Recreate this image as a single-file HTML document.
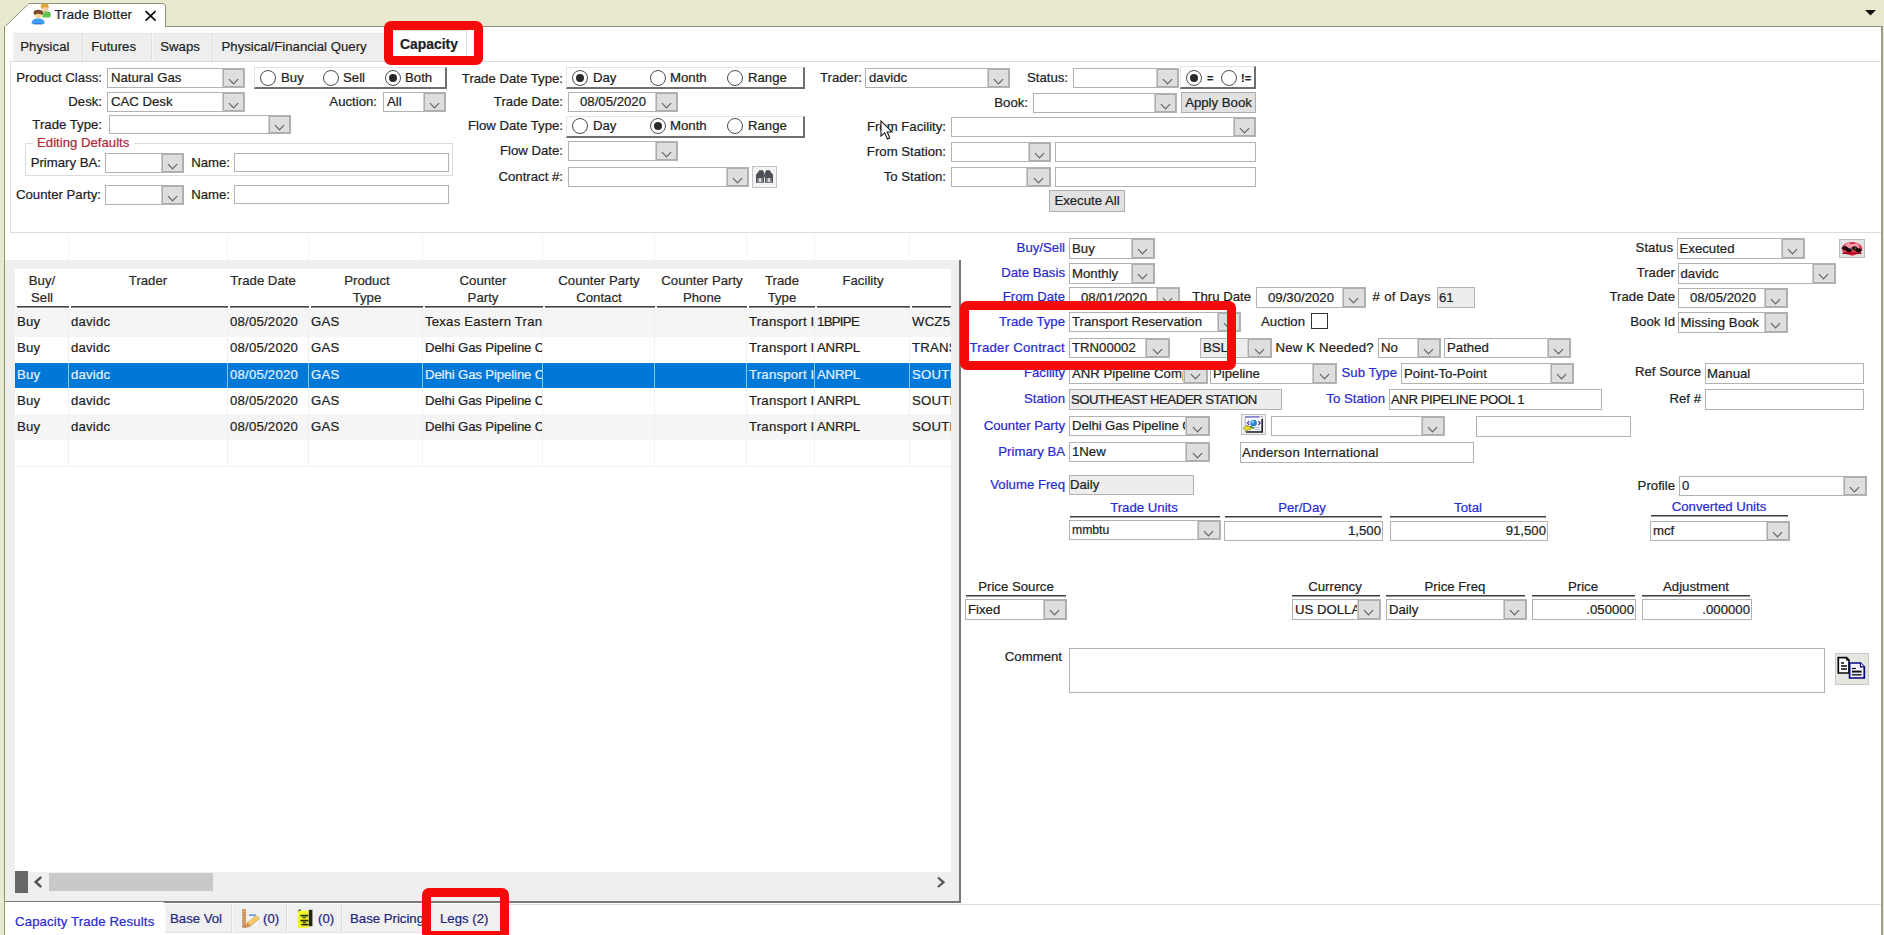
<!DOCTYPE html>
<html lang="en"><head><meta charset="utf-8"><title>Trade Blotter</title>
<style>
html,body{margin:0;padding:0}
body{width:1884px;height:935px;position:relative;overflow:hidden;background:#e9e9d0;font:13.2px "Liberation Sans",sans-serif;color:#1e1e1e;-webkit-text-stroke:.22px}
div,b,i,span{box-sizing:border-box}
.t{position:absolute;white-space:nowrap;line-height:16px;height:16px}
.bl{color:#2a2ad2}
.c{position:absolute;background:#fff;border:1px solid #b2b2b2;overflow:hidden;white-space:nowrap}
.c span{position:absolute;left:3px;top:0}
.c i{position:absolute;right:0;top:0;bottom:0;background:#dedede;border:1px solid #adadad;box-shadow:-1px 0 0 #cfcfcf}
.c i::after{content:"";position:absolute;left:50%;top:50%;width:6px;height:6px;margin:-2.5px 0 0 -4px;border-right:1.3px solid #585858;border-bottom:1.3px solid #585858;transform:rotate(45deg)}
.f{position:absolute;background:#fff;border:1px solid #b2b2b2;overflow:hidden;white-space:nowrap;padding:0 1px}
.g{background:#ededed}
.c.g span{color:#1e1e1e}
.ra{text-align:right}
.r{position:absolute;width:16px;height:16px;border:1.4px solid #4a4a4a;border-radius:50%;background:#fff}
.r.s::after{content:"";position:absolute;left:2.6px;top:2.6px;width:8px;height:8px;border-radius:50%;background:#2a2a2a}
.btn{position:absolute;background:#e1e1e1;border:1px solid #adadad;text-align:center;white-space:nowrap}
.rg{position:absolute;background:#fff;border-top:1px solid #e3e3e3;border-left:1px solid #e3e3e3;border-right:2px solid #6f6f6f;border-bottom:2px solid #6f6f6f}
.th{text-align:center;line-height:17px;height:auto;color:#2a2a2a}
.tr{overflow:hidden}
.td{position:absolute;top:0;height:25px;line-height:22px;padding-left:2px;overflow:hidden;white-space:nowrap;letter-spacing:.2px}
.sel{color:#e4f1ff}

</style></head>
<body>
<div class="" style="position:absolute;left:4px;top:26px;width:1879px;height:914px;background:#fff;border:1px solid #8e9277;border-right:2px solid #9da184"></div>
<svg style="position:absolute;left:0;top:0" width="200" height="30"><path d="M4.5 28 V27 L29 3.5 H162.5 Q165.5 3.5 165.5 6.5 V26.5" fill="#fff" stroke="#8e9277" stroke-width="1"/><rect x="5" y="26" width="160" height="3" fill="#fff"/></svg>
<div class="t " style="left:54.6px;top:7px;letter-spacing:.14px">Trade Blotter</div>
<svg style="position:absolute;left:143px;top:9px" width="14" height="14"><path d="M2.6 2.2 L12.6 11.6 M12.6 2.2 L2.6 11.600" stroke="#111" stroke-width="1.8" fill="none"/></svg>
<svg style="position:absolute;left:30px;top:2px" width="22" height="24" viewBox="0 0 22 24"><ellipse cx="14.7" cy="4.6" rx="4" ry="3" fill="#e2a437"/><ellipse cx="14.9" cy="7.6" rx="3.1" ry="2.3" fill="#f7cfa4"/><path d="M12.4 15.6 V12 Q12.4 9.3 16.6 9.3 T20.8 12.4 V14 Q20.8 15.6 18 15.6Z" fill="#5fc14e"/><path d="M13 15.6 V12.5 Q14 10 16.6 10" fill="none" stroke="#8fe07a" stroke-width="1"/><ellipse cx="8.3" cy="10.6" rx="4.8" ry="2.9" fill="#7b4b2c"/><ellipse cx="8.3" cy="13.6" rx="3.2" ry="2.6" fill="#f9d490"/><path d="M4 11.6 Q8 9.6 12.6 11.8 L12.6 12.6 Q8 10.8 4 12.6Z" fill="#7b4b2c"/><path d="M1.6 21.2 Q1.6 16.4 8.1 16.4 T14.6 21.2 V21.8 H1.6Z" fill="#3d9cf1"/><path d="M3.4 21.8 H12.6" stroke="#1f6fd0" stroke-width="1.2"/></svg>
<svg style="position:absolute;left:1864px;top:9px" width="14" height="8"><path d="M1 1 H12 L6.5 6.5z" fill="#111"/></svg>
<div class="" style="position:absolute;left:13px;top:33px;width:70px;height:29px;background:#eeeeee;border-top:1px solid #e6e6e6;border-left:1px solid #f7f7f7;border-right:1px solid #dfdfdf"></div>
<div class="t " style="left:20.3px;top:39px;">Physical</div>
<div class="" style="position:absolute;left:83px;top:33px;width:69px;height:29px;background:#eeeeee;border-top:1px solid #e6e6e6;border-left:1px solid #f7f7f7;border-right:1px solid #dfdfdf"></div>
<div class="t " style="left:91.3px;top:39px;">Futures</div>
<div class="" style="position:absolute;left:152px;top:33px;width:61px;height:29px;background:#eeeeee;border-top:1px solid #e6e6e6;border-left:1px solid #f7f7f7;border-right:1px solid #dfdfdf"></div>
<div class="t " style="left:160.3px;top:39px;">Swaps</div>
<div class="" style="position:absolute;left:213px;top:33px;width:173px;height:29px;background:#eeeeee;border-top:1px solid #e6e6e6;border-left:1px solid #f7f7f7;border-right:1px solid #dfdfdf"></div>
<div class="t " style="left:221.5px;top:39px;">Physical/Financial Query</div>
<div class="" style="position:absolute;left:386px;top:30px;width:81px;height:33px;background:#fff;border:1px solid #dcdcdc;border-bottom:none"></div>
<div class="t " style="left:400px;top:36px;font-weight:bold;font-size:13.9px">Capacity</div>
<div class="" style="position:absolute;left:10px;top:61px;width:1871px;height:172px;background:#fff;border:1px solid #dcdcdc;border-right:none"></div>
<div class="" style="position:absolute;left:387px;top:61px;width:79px;height:2px;background:#fff"></div>
<div class="t " style="right:1782px;top:70px;">Product Class:</div>
<div class="c " style="left:107px;top:68px;width:138px;height:20px"><span style="line-height:18px;">Natural Gas</span><i style="width:21px"></i></div>
<div class="rg" style="position:absolute;left:254px;top:67px;width:193px;height:22px;"></div>
<b class="r" style="left:260px;top:70px"></b>
<div class="t " style="left:281px;top:70px;">Buy</div>
<b class="r" style="left:323px;top:70px"></b>
<div class="t " style="left:343px;top:70px;">Sell</div>
<b class="r s" style="left:385px;top:70px"></b>
<div class="t " style="left:405px;top:70px;">Both</div>
<div class="t " style="right:1321px;top:71px;">Trade Date Type:</div>
<div class="rg" style="position:absolute;left:566px;top:67px;width:239px;height:22px;"></div>
<b class="r s" style="left:572px;top:70px"></b>
<div class="t " style="left:593px;top:70px;">Day</div>
<b class="r" style="left:650px;top:70px"></b>
<div class="t " style="left:670px;top:70px;">Month</div>
<b class="r" style="left:727px;top:70px"></b>
<div class="t " style="left:748px;top:70px;">Range</div>
<div class="t " style="right:1022px;top:70px;">Trader:</div>
<div class="c " style="left:865px;top:68px;width:145px;height:20px"><span style="line-height:18px;">davidc</span><i style="width:21px"></i></div>
<div class="t " style="right:816px;top:70px;">Status:</div>
<div class="c " style="left:1073px;top:68px;width:106px;height:20px"><span style="line-height:18px;"></span><i style="width:21px"></i></div>
<div class="rg" style="position:absolute;left:1180px;top:66px;width:76px;height:23px;"></div>
<b class="r s" style="left:1186px;top:70px"></b>
<div class="t " style="left:1207px;top:70px;font-weight:bold;font-size:11px">=</div>
<b class="r" style="left:1221px;top:70px"></b>
<div class="t " style="left:1241px;top:70px;font-weight:bold;font-size:11px">!=</div>
<div class="t " style="right:1782px;top:94px;">Desk:</div>
<div class="c " style="left:107px;top:92px;width:138px;height:20px"><span style="line-height:18px;">CAC Desk</span><i style="width:21px"></i></div>
<div class="t " style="right:1507px;top:94px;">Auction:</div>
<div class="c " style="left:383px;top:92px;width:63px;height:20px"><span style="line-height:18px;">All</span><i style="width:21px"></i></div>
<div class="t " style="right:1321px;top:94px;">Trade Date:</div>
<div class="c " style="left:568px;top:92px;width:110px;height:20px"><span style="line-height:18px;left:11px">08/05/2020</span><i style="width:21px"></i></div>
<div class="t " style="right:856px;top:95px;">Book:</div>
<div class="c " style="left:1033px;top:93px;width:144px;height:20px"><span style="line-height:18px;"></span><i style="width:21px"></i></div>
<div class="btn" style="left:1181px;top:92px;width:75px;height:21px;line-height:19px">Apply Book</div>
<div class="t " style="right:1782px;top:117px;">Trade Type:</div>
<div class="c " style="left:109px;top:115px;width:182px;height:19px"><span style="line-height:17px;"></span><i style="width:21px"></i></div>
<div class="t " style="right:1321px;top:118px;">Flow Date Type:</div>
<div class="rg" style="position:absolute;left:566px;top:116px;width:239px;height:22px;"></div>
<b class="r" style="left:572px;top:118px"></b>
<div class="t " style="left:593px;top:118px;">Day</div>
<b class="r s" style="left:650px;top:118px"></b>
<div class="t " style="left:670px;top:118px;">Month</div>
<b class="r" style="left:727px;top:118px"></b>
<div class="t " style="left:748px;top:118px;">Range</div>
<div class="t " style="right:938px;top:119px;">From Facility:</div>
<div class="c " style="left:951px;top:117px;width:305px;height:20px"><span style="line-height:18px;"></span><i style="width:21px"></i></div>
<div class="" style="position:absolute;left:25px;top:143px;width:428px;height:33px;border:1px solid #dcdcdc"></div>
<div class="" style="position:absolute;left:33px;top:138px;width:101px;height:12px;background:#fff"></div>
<div class="t " style="left:37px;top:135px;color:#b02a38">Editing Defaults</div>
<div class="t " style="right:1783px;top:155px;">Primary BA:</div>
<div class="c " style="left:105px;top:153px;width:79px;height:20px"><span style="line-height:18px;"></span><i style="width:21px"></i></div>
<div class="t " style="right:1654px;top:155px;">Name:</div>
<div class="f " style="left:234px;top:153px;width:215px;height:19px;line-height:17px;"></div>
<div class="t " style="right:1321px;top:143px;">Flow Date:</div>
<div class="c " style="left:568px;top:141px;width:110px;height:20px"><span style="line-height:18px;"></span><i style="width:21px"></i></div>
<div class="t " style="right:938px;top:144px;">From Station:</div>
<div class="c " style="left:951px;top:142px;width:100px;height:20px"><span style="line-height:18px;"></span><i style="width:21px"></i></div>
<div class="f " style="left:1055px;top:142px;width:201px;height:20px;line-height:18px;"></div>
<div class="t " style="right:1321px;top:169px;">Contract #:</div>
<div class="c " style="left:568px;top:167px;width:181px;height:20px"><span style="line-height:18px;"></span><i style="width:21px"></i></div>
<div class="" style="position:absolute;left:752px;top:166px;width:25px;height:22px;background:#f4f4f4;border:1px solid #c4c4c4"></div>
<svg style="position:absolute;left:755px;top:169px" width="19" height="15" viewBox="0 0 19 15"><path d="M1 13.8 V6.5 Q1 4.5 3 3.4 L4.2 1.2 H8 L9.2 4 V13.8Z" fill="#4b4f56"/><path d="M9.9 13.8 V4 L11 1.2 H14.8 L16 3.4 Q18 4.5 18 6.5 V13.8Z" fill="#4b4f56"/><rect x="8" y="5" width="3" height="3.4" fill="#5a5e66"/><rect x="2.4" y="9.2" width="5.4" height="3.8" fill="#8e9094"/><rect x="4" y="9.2" width="2" height="3.8" fill="#dcdcdc"/><rect x="11.2" y="9.2" width="5.4" height="3.8" fill="#8e9094"/><rect x="12.9" y="9.2" width="2" height="3.8" fill="#dcdcdc"/><rect x="9.25" y="8.6" width=".8" height="5.4" fill="#fff"/></svg>
<div class="t " style="right:938px;top:169px;">To Station:</div>
<div class="c " style="left:951px;top:167px;width:100px;height:20px"><span style="line-height:18px;"></span><i style="width:23px"></i></div>
<div class="f " style="left:1055px;top:167px;width:201px;height:20px;line-height:18px;"></div>
<div class="t " style="right:1783px;top:187px;">Counter Party:</div>
<div class="c " style="left:105px;top:185px;width:79px;height:20px"><span style="line-height:18px;"></span><i style="width:21px"></i></div>
<div class="t " style="right:1654px;top:187px;">Name:</div>
<div class="f " style="left:234px;top:185px;width:215px;height:19px;line-height:17px;"></div>
<div class="btn" style="left:1049px;top:190px;width:76px;height:22px;line-height:20px">Execute All</div>
<svg style="position:absolute;left:880px;top:119.6px" width="13.3" height="20.9" viewBox="0 0 14 22"><path d="M1 1 V17 L5 13.5 L7.8 20 L10.3 19 L7.6 12.6 H12.5z" fill="#fff" stroke="#111" stroke-width="1.1"/></svg>
<div class="" style="position:absolute;left:68px;top:234px;width:1px;height:26px;background:#f3f3f3"></div>
<div class="" style="position:absolute;left:227px;top:234px;width:1px;height:26px;background:#f3f3f3"></div>
<div class="" style="position:absolute;left:308px;top:234px;width:1px;height:26px;background:#f3f3f3"></div>
<div class="" style="position:absolute;left:422px;top:234px;width:1px;height:26px;background:#f3f3f3"></div>
<div class="" style="position:absolute;left:542px;top:234px;width:1px;height:26px;background:#f3f3f3"></div>
<div class="" style="position:absolute;left:654px;top:234px;width:1px;height:26px;background:#f3f3f3"></div>
<div class="" style="position:absolute;left:746px;top:234px;width:1px;height:26px;background:#f3f3f3"></div>
<div class="" style="position:absolute;left:814px;top:234px;width:1px;height:26px;background:#f3f3f3"></div>
<div class="" style="position:absolute;left:909px;top:234px;width:1px;height:26px;background:#f3f3f3"></div>
<div class="" style="position:absolute;left:5px;top:260px;width:956px;height:643px;background:#efefef"></div>
<div class="" style="position:absolute;left:959px;top:260px;width:2px;height:643px;background:#787878"></div>
<div class="" style="position:absolute;left:5px;top:901px;width:956px;height:2px;background:#787878"></div>
<div class="" style="position:absolute;left:15px;top:269px;width:936px;height:603px;background:#fff"></div>
<div class="t th" style="left:-18px;width:120px;top:272px">Buy/<br>Sell</div>
<div class="t th" style="left:88px;width:120px;top:272px">Trader</div>
<div class="t th" style="left:203px;width:120px;top:272px">Trade Date</div>
<div class="t th" style="left:307px;width:120px;top:272px">Product<br>Type</div>
<div class="t th" style="left:423px;width:120px;top:272px">Counter<br>Party</div>
<div class="t th" style="left:539px;width:120px;top:272px">Counter Party<br>Contact</div>
<div class="t th" style="left:642px;width:120px;top:272px">Counter Party<br>Phone</div>
<div class="t th" style="left:722px;width:120px;top:272px">Trade<br>Type</div>
<div class="t th" style="left:803px;width:120px;top:272px">Facility</div>
<div class="" style="position:absolute;left:17px;top:306px;width:52px;height:2px;border-top:1px solid #444;border-bottom:1px solid #8a8a8a"></div>
<div class="" style="position:absolute;left:71px;top:306px;width:157px;height:2px;border-top:1px solid #444;border-bottom:1px solid #8a8a8a"></div>
<div class="" style="position:absolute;left:230px;top:306px;width:79px;height:2px;border-top:1px solid #444;border-bottom:1px solid #8a8a8a"></div>
<div class="" style="position:absolute;left:311px;top:306px;width:112px;height:2px;border-top:1px solid #444;border-bottom:1px solid #8a8a8a"></div>
<div class="" style="position:absolute;left:425px;top:306px;width:118px;height:2px;border-top:1px solid #444;border-bottom:1px solid #8a8a8a"></div>
<div class="" style="position:absolute;left:545px;top:306px;width:110px;height:2px;border-top:1px solid #444;border-bottom:1px solid #8a8a8a"></div>
<div class="" style="position:absolute;left:657px;top:306px;width:90px;height:2px;border-top:1px solid #444;border-bottom:1px solid #8a8a8a"></div>
<div class="" style="position:absolute;left:749px;top:306px;width:66px;height:2px;border-top:1px solid #444;border-bottom:1px solid #8a8a8a"></div>
<div class="" style="position:absolute;left:817px;top:306px;width:93px;height:2px;border-top:1px solid #444;border-bottom:1px solid #8a8a8a"></div>
<div class="" style="position:absolute;left:912px;top:306px;width:39px;height:2px;border-top:1px solid #444;border-bottom:1px solid #8a8a8a"></div>
<div class="tr" style="position:absolute;left:15px;top:309px;width:936px;height:28px;background:#f5f5f5"><div class="td" style="left:0px;width:54px;top:2px">Buy</div><div class="td" style="left:54px;width:159px;top:2px">davidc</div><div class="td" style="left:213px;width:81px;top:2px">08/05/2020</div><div class="td" style="left:294px;width:114px;top:2px">GAS</div><div class="td" style="left:408px;width:120px;top:2px">Texas Eastern Tran</div><div class="td" style="left:528px;width:112px;top:2px"></div><div class="td" style="left:640px;width:92px;top:2px"></div><div class="td" style="left:732px;width:68px;top:2px">Transport I</div><div class="td" style="left:800px;width:95px;top:2px;letter-spacing:-.7px">1BPIPE</div><div class="td" style="left:895px;width:41px;top:2px">WCZ5</div></div>
<div class="tr" style="position:absolute;left:15px;top:337px;width:936px;height:26px;background:#fff"><div class="td" style="left:0px;width:54px;top:0px">Buy</div><div class="td" style="left:54px;width:159px;top:0px">davidc</div><div class="td" style="left:213px;width:81px;top:0px">08/05/2020</div><div class="td" style="left:294px;width:114px;top:0px">GAS</div><div class="td" style="left:408px;width:120px;top:0px;letter-spacing:-.12px">Delhi Gas Pipeline C</div><div class="td" style="left:528px;width:112px;top:0px"></div><div class="td" style="left:640px;width:92px;top:0px"></div><div class="td" style="left:732px;width:68px;top:0px">Transport I</div><div class="td" style="left:800px;width:95px;top:0px;letter-spacing:-.2px">ANRPL</div><div class="td" style="left:895px;width:41px;top:0px">TRANS</div></div>
<div class="tr sel" style="position:absolute;left:15px;top:363px;width:936px;height:25px;background:#0078d7"><div class="td" style="left:0px;width:54px;top:1px">Buy</div><div class="td" style="left:54px;width:159px;top:1px">davidc</div><div class="td" style="left:213px;width:81px;top:1px">08/05/2020</div><div class="td" style="left:294px;width:114px;top:1px">GAS</div><div class="td" style="left:408px;width:120px;top:1px;letter-spacing:-.12px">Delhi Gas Pipeline C</div><div class="td" style="left:528px;width:112px;top:1px"></div><div class="td" style="left:640px;width:92px;top:1px"></div><div class="td" style="left:732px;width:68px;top:1px">Transport I</div><div class="td" style="left:800px;width:95px;top:1px;letter-spacing:-.2px">ANRPL</div><div class="td" style="left:895px;width:41px;top:1px">SOUTH</div></div>
<div class="tr" style="position:absolute;left:15px;top:388px;width:936px;height:26px;background:#fff"><div class="td" style="left:0px;width:54px;top:2px">Buy</div><div class="td" style="left:54px;width:159px;top:2px">davidc</div><div class="td" style="left:213px;width:81px;top:2px">08/05/2020</div><div class="td" style="left:294px;width:114px;top:2px">GAS</div><div class="td" style="left:408px;width:120px;top:2px;letter-spacing:-.12px">Delhi Gas Pipeline C</div><div class="td" style="left:528px;width:112px;top:2px"></div><div class="td" style="left:640px;width:92px;top:2px"></div><div class="td" style="left:732px;width:68px;top:2px">Transport I</div><div class="td" style="left:800px;width:95px;top:2px;letter-spacing:-.2px">ANRPL</div><div class="td" style="left:895px;width:41px;top:2px">SOUTH</div></div>
<div class="tr" style="position:absolute;left:15px;top:414px;width:936px;height:26px;background:#f5f5f5"><div class="td" style="left:0px;width:54px;top:2px">Buy</div><div class="td" style="left:54px;width:159px;top:2px">davidc</div><div class="td" style="left:213px;width:81px;top:2px">08/05/2020</div><div class="td" style="left:294px;width:114px;top:2px">GAS</div><div class="td" style="left:408px;width:120px;top:2px;letter-spacing:-.12px">Delhi Gas Pipeline C</div><div class="td" style="left:528px;width:112px;top:2px"></div><div class="td" style="left:640px;width:92px;top:2px"></div><div class="td" style="left:732px;width:68px;top:2px">Transport I</div><div class="td" style="left:800px;width:95px;top:2px;letter-spacing:-.2px">ANRPL</div><div class="td" style="left:895px;width:41px;top:2px">SOUTH</div></div>
<div class="tr" style="position:absolute;left:15px;top:440px;width:936px;height:26px;background:#fff"><div class="td" style="left:0px;width:54px;top:0px"></div><div class="td" style="left:54px;width:159px;top:0px"></div><div class="td" style="left:213px;width:81px;top:0px"></div><div class="td" style="left:294px;width:114px;top:0px"></div><div class="td" style="left:408px;width:120px;top:0px"></div><div class="td" style="left:528px;width:112px;top:0px"></div><div class="td" style="left:640px;width:92px;top:0px"></div><div class="td" style="left:732px;width:68px;top:0px"></div><div class="td" style="left:800px;width:95px;top:0px"></div><div class="td" style="left:895px;width:41px;top:0px"></div></div>
<div class="" style="position:absolute;left:68px;top:309px;width:1px;height:157px;background:#f0f0f0"></div>
<div class="" style="position:absolute;left:227px;top:309px;width:1px;height:157px;background:#f0f0f0"></div>
<div class="" style="position:absolute;left:308px;top:309px;width:1px;height:157px;background:#f0f0f0"></div>
<div class="" style="position:absolute;left:422px;top:309px;width:1px;height:157px;background:#f0f0f0"></div>
<div class="" style="position:absolute;left:542px;top:309px;width:1px;height:157px;background:#f0f0f0"></div>
<div class="" style="position:absolute;left:654px;top:309px;width:1px;height:157px;background:#f0f0f0"></div>
<div class="" style="position:absolute;left:746px;top:309px;width:1px;height:157px;background:#f0f0f0"></div>
<div class="" style="position:absolute;left:814px;top:309px;width:1px;height:157px;background:#f0f0f0"></div>
<div class="" style="position:absolute;left:909px;top:309px;width:1px;height:157px;background:#f0f0f0"></div>
<div class="" style="position:absolute;left:68px;top:363px;width:1px;height:25px;background:#84c6f7"></div>
<div class="" style="position:absolute;left:227px;top:363px;width:1px;height:25px;background:#84c6f7"></div>
<div class="" style="position:absolute;left:308px;top:363px;width:1px;height:25px;background:#84c6f7"></div>
<div class="" style="position:absolute;left:422px;top:363px;width:1px;height:25px;background:#84c6f7"></div>
<div class="" style="position:absolute;left:542px;top:363px;width:1px;height:25px;background:#84c6f7"></div>
<div class="" style="position:absolute;left:654px;top:363px;width:1px;height:25px;background:#84c6f7"></div>
<div class="" style="position:absolute;left:746px;top:363px;width:1px;height:25px;background:#84c6f7"></div>
<div class="" style="position:absolute;left:814px;top:363px;width:1px;height:25px;background:#84c6f7"></div>
<div class="" style="position:absolute;left:909px;top:363px;width:1px;height:25px;background:#84c6f7"></div>
<div class="" style="position:absolute;left:15px;top:466px;width:936px;height:1px;background:#efefef"></div>
<div class="" style="position:absolute;left:15px;top:872px;width:936px;height:29px;background:#efefef"></div>
<div class="" style="position:absolute;left:15px;top:871px;width:13px;height:22px;background:#666"></div>
<svg style="position:absolute;left:32px;top:874px" width="12" height="16"><path d="M9.2 3 L3.6 8 L9.2 13" fill="none" stroke="#555" stroke-width="2.4"/></svg>
<div class="" style="position:absolute;left:49px;top:873px;width:164px;height:18px;background:#c9c9c9"></div>
<svg style="position:absolute;left:935px;top:875px" width="12" height="14"><path d="M3 2.5 L8.5 7.3 L3 12" fill="none" stroke="#555" stroke-width="2.2"/></svg>
<div class="" style="position:absolute;left:5px;top:904px;width:1876px;height:2px;border-top:1px solid #dcdcdc"></div>
<div class="" style="position:absolute;left:5px;top:902px;width:159px;height:34px;background:#fff"></div>
<div class="t bl" style="left:15px;top:914px;letter-spacing:.14px">Capacity Trade Results</div>
<div class="" style="position:absolute;left:165px;top:904px;width:67px;height:29px;background:#f0f0f0;border-right:1px solid #dcdcdc;border-left:1px solid #f8f8f8;border-bottom:1px solid #e2e2e2"></div>
<div class="t " style="left:170px;top:911px;color:#26267c">Base Vol</div>
<div class="" style="position:absolute;left:232px;top:904px;width:55px;height:29px;background:#f0f0f0;border-right:1px solid #dcdcdc;border-left:1px solid #f8f8f8;border-bottom:1px solid #e2e2e2"></div>
<div class="t " style="left:263px;top:911px;color:#26267c">(0)</div>
<div class="" style="position:absolute;left:287px;top:904px;width:55px;height:29px;background:#f0f0f0;border-right:1px solid #dcdcdc;border-left:1px solid #f8f8f8;border-bottom:1px solid #e2e2e2"></div>
<div class="t " style="left:318px;top:911px;color:#26267c">(0)</div>
<div class="" style="position:absolute;left:342px;top:904px;width:86px;height:29px;background:#f0f0f0;border-right:1px solid #dcdcdc;border-left:1px solid #f8f8f8;border-bottom:1px solid #e2e2e2"></div>
<div class="t " style="left:350px;top:911px;color:#26267c">Base Pricing</div>
<div class="" style="position:absolute;left:428px;top:904px;width:73px;height:29px;background:#f0f0f0;border-right:1px solid #dcdcdc;border-left:1px solid #f8f8f8;border-bottom:1px solid #e2e2e2"></div>
<div class="t " style="left:440px;top:911px;color:#26267c">Legs (2)</div>
<svg style="position:absolute;left:241px;top:908px" width="20" height="21" viewBox="0 0 20 21"><path d="M6.5 4.4 H15.5 L18 7 V19 H6.5Z" fill="#f4f7fb" stroke="#dfe6f0" stroke-width=".6"/><path d="M8 7.2 H15" stroke="#6f9fdc" stroke-width="1.8"/><rect x="1.2" y="1.2" width="3.8" height="18.6" fill="#c78d55"/><path d="M1.2 3.5h3.8M1.2 6h3.8M1.2 8.5h3.8M1.2 11h3.8M1.2 13.500h3.8M1.2 16h3.8" stroke="#e9b98a" stroke-width=".7"/><path d="M4.6 19.6 L6.4 14.4 L15.4 7.6 L18.4 10.8 L9.6 18Z" fill="#f3c86a" stroke="#c99a40" stroke-width=".6"/><path d="M4.6 19.6 L6.4 14.4 L9.6 18Z" fill="#c78d55"/></svg>
<svg style="position:absolute;left:296px;top:908px" width="18" height="21" viewBox="0 0 18 21"><rect x="1.8" y="2.8" width="10.6" height="17" fill="#f4f81c"/><rect x="12.8" y="1.8" width="3.6" height="16.4" fill="#1f2a0a"/><path d="M4.4 7.600h7.800M4.400 12.6h8M5.400 16.6h7" stroke="#232a08" stroke-width="1.8"/><path d="M6.5 9.8h3.500M7 14.600h3" stroke="#232a08" stroke-width="1"/><path d="M2.4 3 L4.800 1.400" stroke="#2a5a1a" stroke-width="1.2"/></svg>
<div class="t bl" style="right:819px;top:240px;">Buy/Sell</div>
<div class="c " style="left:1069px;top:238px;width:86px;height:21px"><span style="line-height:19px;left:2px;">Buy</span><i style="width:22px"></i></div>
<div class="t bl" style="right:819px;top:265px;">Date Basis</div>
<div class="c " style="left:1069px;top:263px;width:86px;height:21px"><span style="line-height:19px;left:2px;">Monthly</span><i style="width:22px"></i></div>
<div class="t bl" style="right:819px;top:289px;">From Date</div>
<div class="c " style="left:1069px;top:287px;width:111px;height:21px"><span style="line-height:19px;left:11px">08/01/2020</span><i style="width:22px"></i></div>
<div class="t " style="right:633px;top:289px;">Thru Date</div>
<div class="c " style="left:1256px;top:287px;width:110px;height:21px"><span style="line-height:19px;left:11px">09/30/2020</span><i style="width:22px"></i></div>
<div class="t " style="right:453px;top:289px;letter-spacing:.3px"># of Days</div>
<div class="f g" style="left:1437px;top:287px;width:38px;height:21px;line-height:19px;">61</div>
<div class="t bl" style="right:819px;top:314px;">Trade Type</div>
<div class="c " style="left:1069px;top:312px;width:172px;height:20px"><span style="line-height:18px;left:2px;">Transport Reservation</span><i style="width:22px"></i></div>
<div class="t " style="right:579px;top:314px;">Auction</div>
<div class="" style="position:absolute;left:1311px;top:313px;width:17px;height:16px;background:#fff;border:1.3px solid #333"></div>
<div class="t bl" style="right:819px;top:340px;letter-spacing:.24px">Trader Contract</div>
<div class="c " style="left:1069px;top:338px;width:101px;height:20px"><span style="line-height:18px;left:2px;">TRN00002</span><i style="width:23px"></i></div>
<div class="c g" style="left:1200px;top:338px;width:72px;height:20px"><span style="line-height:18px;left:2px;">BSL</span><i style="width:23px"></i></div>
<div class="t " style="left:1275.5px;top:340px;letter-spacing:.18px">New K Needed?</div>
<div class="c " style="left:1378px;top:338px;width:63px;height:20px"><span style="line-height:18px;left:2px;">No</span><i style="width:22px"></i></div>
<div class="c " style="left:1444px;top:338px;width:127px;height:20px"><span style="line-height:18px;left:2px;">Pathed</span><i style="width:22px"></i></div>
<div class="t bl" style="right:819px;top:365px;">Facility</div>
<div class="c " style="left:1069px;top:363px;width:139px;height:21px"><span style="line-height:19px;left:2px;">ANR Pipeline Comp</span><i style="width:23px"></i></div>
<div class="c " style="left:1210px;top:363px;width:127px;height:21px"><span style="line-height:19px;left:2px;">Pipeline</span><i style="width:23px"></i></div>
<div class="t bl" style="right:487px;top:365px;">Sub Type</div>
<div class="c " style="left:1401px;top:363px;width:173px;height:21px"><span style="line-height:19px;left:2px;">Point-To-Point</span><i style="width:22px"></i></div>
<div class="t bl" style="right:819px;top:391px;">Station</div>
<div class="f g" style="left:1069px;top:389px;width:213px;height:21px;line-height:19px;letter-spacing:-.5px">SOUTHEAST HEADER STATION</div>
<div class="t bl" style="right:499px;top:391px;">To Station</div>
<div class="f " style="left:1389px;top:389px;width:213px;height:21px;line-height:19px;letter-spacing:-.45px">ANR PIPELINE POOL 1</div>
<div class="t bl" style="right:819px;top:418px;">Counter Party</div>
<div class="c " style="left:1069px;top:416px;width:141px;height:20px"><span style="line-height:18px;left:2px;letter-spacing:-.1px">Delhi Gas Pipeline C</span><i style="width:23px"></i></div>
<div class="" style="position:absolute;left:1241px;top:414px;width:25px;height:21px;background:#f2f2f2;border:1px solid #bdbdbd"></div>
<svg style="position:absolute;left:1242px;top:415px" width="23" height="19" viewBox="0 0 23 19"><rect x="3.2" y="1.8" width="17" height="15" fill="#fff" stroke="#9a9aa8" stroke-width=".8"/><path d="M3.2 2 H17" stroke="#6a6ad0" stroke-width="1.2"/><path d="M20.2 4 V17 H4" fill="none" stroke="#222" stroke-width="1.6"/><circle cx="11.6" cy="8" r="3.3" fill="#2a7fd0"/><circle cx="10.8" cy="7" r="1.4" fill="#7fd8f0"/><path d="M7.2 6 L5.4 8 L7.2 10 M16.4 6 L18.2 8 L16.4 10" fill="none" stroke="#3a3ab0" stroke-width="1.2"/><path d="M12 12.4 h6 M13 14.6 h5" stroke="#9ab0e8" stroke-width="1"/><path d="M1.2 13.2 L5.4 10 V11.8 H9 V14.8 H5.4 V16.6Z" fill="#e8e020" stroke="#7a7a10" stroke-width=".6"/><path d="M8 11 L12 13.6" stroke="#2a7a2a" stroke-width="1.4"/></svg>
<div class="c " style="left:1271px;top:416px;width:174px;height:20px"><span style="line-height:18px;left:2px;"></span><i style="width:22px"></i></div>
<div class="f " style="left:1476px;top:416px;width:155px;height:21px;line-height:19px;"></div>
<div class="t bl" style="right:819px;top:444px;">Primary BA</div>
<div class="c " style="left:1069px;top:442px;width:141px;height:20px"><span style="line-height:18px;left:2px;">1New</span><i style="width:23px"></i></div>
<div class="f " style="left:1240px;top:442px;width:234px;height:21px;line-height:19px;letter-spacing:.18px">Anderson International</div>
<div class="t bl" style="right:819px;top:477px;">Volume Freq</div>
<div class="f g" style="left:1069px;top:475px;width:125px;height:20px;line-height:18px;padding-left:0">Daily</div>
<div class="t bl" style="left:994px;width:300px;text-align:center;top:500px;">Trade Units</div>
<div class="" style="position:absolute;left:1070px;top:516px;width:150px;height:2px;border-top:1px solid #3e3e3e;border-bottom:1px solid #9c9c9c"></div>
<div class="t bl" style="left:1152px;width:300px;text-align:center;top:500px;">Per/Day</div>
<div class="" style="position:absolute;left:1225px;top:516px;width:157px;height:2px;border-top:1px solid #3e3e3e;border-bottom:1px solid #9c9c9c"></div>
<div class="t bl" style="left:1318px;width:300px;text-align:center;top:500px;">Total</div>
<div class="" style="position:absolute;left:1390px;top:516px;width:156px;height:2px;border-top:1px solid #3e3e3e;border-bottom:1px solid #9c9c9c"></div>
<div class="t bl" style="left:1569px;width:300px;text-align:center;top:499px;">Converted Units</div>
<div class="" style="position:absolute;left:1651px;top:515px;width:137px;height:2px;border-top:1px solid #3e3e3e;border-bottom:1px solid #9c9c9c"></div>
<div class="c " style="left:1069px;top:520px;width:152px;height:20px"><span style="line-height:18px;font-size:12.2px;left:2px">mmbtu</span><i style="width:22px"></i></div>
<div class="f ra" style="left:1224px;top:521px;width:159px;height:20px;line-height:18px;">1,500</div>
<div class="f ra" style="left:1390px;top:521px;width:158px;height:20px;line-height:18px;">91,500</div>
<div class="c " style="left:1650px;top:521px;width:140px;height:20px"><span style="line-height:18px;left:2px;">mcf</span><i style="width:22px"></i></div>
<div class="t " style="left:866px;width:300px;text-align:center;top:579px;">Price Source</div>
<div class="" style="position:absolute;left:966px;top:595px;width:100px;height:2px;border-top:1px solid #3e3e3e;border-bottom:1px solid #9c9c9c"></div>
<div class="t " style="left:1185px;width:300px;text-align:center;top:579px;">Currency</div>
<div class="" style="position:absolute;left:1292px;top:595px;width:88px;height:2px;border-top:1px solid #3e3e3e;border-bottom:1px solid #9c9c9c"></div>
<div class="t " style="left:1305px;width:300px;text-align:center;top:579px;">Price Freq</div>
<div class="" style="position:absolute;left:1386px;top:595px;width:139px;height:2px;border-top:1px solid #3e3e3e;border-bottom:1px solid #9c9c9c"></div>
<div class="t " style="left:1433px;width:300px;text-align:center;top:579px;">Price</div>
<div class="" style="position:absolute;left:1532px;top:595px;width:103px;height:2px;border-top:1px solid #3e3e3e;border-bottom:1px solid #9c9c9c"></div>
<div class="t " style="left:1546px;width:300px;text-align:center;top:579px;">Adjustment</div>
<div class="" style="position:absolute;left:1642px;top:595px;width:108px;height:2px;border-top:1px solid #3e3e3e;border-bottom:1px solid #9c9c9c"></div>
<div class="c " style="left:965px;top:599px;width:102px;height:21px"><span style="line-height:19px;left:2px;">Fixed</span><i style="width:22px"></i></div>
<div class="c " style="left:1292px;top:599px;width:89px;height:21px"><span style="line-height:19px;left:2px;">US DOLLA</span><i style="width:22px"></i></div>
<div class="c " style="left:1386px;top:599px;width:141px;height:21px"><span style="line-height:19px;left:2px;">Daily</span><i style="width:22px"></i></div>
<div class="f ra" style="left:1532px;top:599px;width:104px;height:21px;line-height:19px;">.050000</div>
<div class="f ra" style="left:1642px;top:599px;width:110px;height:21px;line-height:19px;">.000000</div>
<div class="t " style="right:822px;top:649px;">Comment</div>
<div class="f " style="left:1069px;top:648px;width:756px;height:45px;line-height:43px;"></div>
<div class="" style="position:absolute;left:1835px;top:653px;width:34px;height:32px;background:#e6e6e0;border:1px solid #c9c9c9"></div>
<svg style="position:absolute;left:1836px;top:655px" width="31" height="26" viewBox="0 0 31 26"><path d="M2.3 2.7 H10.5 L13 5.2 V18 H2.3Z" fill="#fff" stroke="#0a0a0a" stroke-width="1.7"/><path d="M5 8 h3 M5 11 h6 M5 14 h6" stroke="#0a0a0a" stroke-width="1.5"/><path d="M10.5 2.7 V5.2 H13" fill="none" stroke="#0a0a0a" stroke-width="1"/><path d="M13.6 8 H24.5 L28.3 11.8 V23 H13.6Z" fill="#eef0ff" stroke="#06067e" stroke-width="1.7"/><path d="M24.5 8 V11.8 H28.3" fill="#fff" stroke="#06067e" stroke-width="1.2"/><path d="M16 13.5 h4" stroke="#111" stroke-width="1.2"/><path d="M16 16.6 h9.6" stroke="#0a0a0a" stroke-width="1.9"/><path d="M16 19.8 h9.6" stroke="#0a0a0a" stroke-width="1.3"/></svg>
<div class="t " style="right:211px;top:240px;">Status</div>
<div class="c " style="left:1677px;top:238px;width:128px;height:21px"><span style="line-height:19px;left:1.5px">Executed</span><i style="width:22px"></i></div>
<div class="" style="position:absolute;left:1839px;top:239px;width:26px;height:19px;background:#dfe6e4;border:1px solid #b9b9b9"></div>
<svg style="position:absolute;left:1840px;top:240px" width="24" height="17" viewBox="0 0 24 17"><ellipse cx="12" cy="8.6" rx="10.4" ry="6.6" fill="#e63c58"/><ellipse cx="12" cy="6.4" rx="7.4" ry="3.6" fill="#f59aa8"/><path d="M3 9.2 Q5 6.6 7 9.2 T11 9.2 M12.6 9.4 Q14.6 6.6 16.6 9.4 T20.8 9" fill="none" stroke="#1a0508" stroke-width="3.6"/><path d="M2.4 13.2 H21.4" stroke="#a00018" stroke-width="1.6"/><path d="M10 3.2 h5" stroke="#d0102a" stroke-width="1.2"/><rect x="10.5" y="13.6" width="3.4" height="1.8" fill="#e81030"/><path d="M14.2 9.6 l2.2-2" stroke="#3a6a2a" stroke-width="1.4"/></svg>
<div class="t " style="right:209px;top:265px;">Trader</div>
<div class="c " style="left:1678px;top:263px;width:158px;height:21px"><span style="line-height:19px;left:1.5px">davidc</span><i style="width:22px"></i></div>
<div class="t " style="right:209px;top:289px;">Trade Date</div>
<div class="c " style="left:1678px;top:288px;width:110px;height:20px"><span style="line-height:18px;left:11px">08/05/2020</span><i style="width:22px"></i></div>
<div class="t " style="right:209px;top:314px;">Book Id</div>
<div class="c " style="left:1678px;top:312px;width:110px;height:21px"><span style="line-height:19px;left:1.5px">Missing Book</span><i style="width:22px"></i></div>
<div class="t " style="right:183px;top:364px;">Ref Source</div>
<div class="f " style="left:1705px;top:363px;width:159px;height:21px;line-height:19px;">Manual</div>
<div class="t " style="right:183px;top:391px;">Ref #</div>
<div class="f " style="left:1705px;top:389px;width:159px;height:21px;line-height:19px;"></div>
<div class="t " style="right:209px;top:478px;">Profile</div>
<div class="c " style="left:1679px;top:476px;width:188px;height:20px"><span style="line-height:18px;left:2px;">0</span><i style="width:22px"></i></div>
<div style="position:absolute;left:384.3px;top:21.4px;width:98.5px;height:43.800000000000004px;border:9px solid #f50a0a;border-radius:7px;z-index:9"></div>
<div style="position:absolute;left:960.2px;top:301px;width:275.5999999999999px;height:68.60000000000002px;border:9.6px solid #f50a0a;border-radius:7px;z-index:9"></div>
<div style="position:absolute;left:422px;top:888px;width:87px;height:52px;border:9px solid #f50a0a;border-radius:7px;z-index:9"></div>
</body></html>
